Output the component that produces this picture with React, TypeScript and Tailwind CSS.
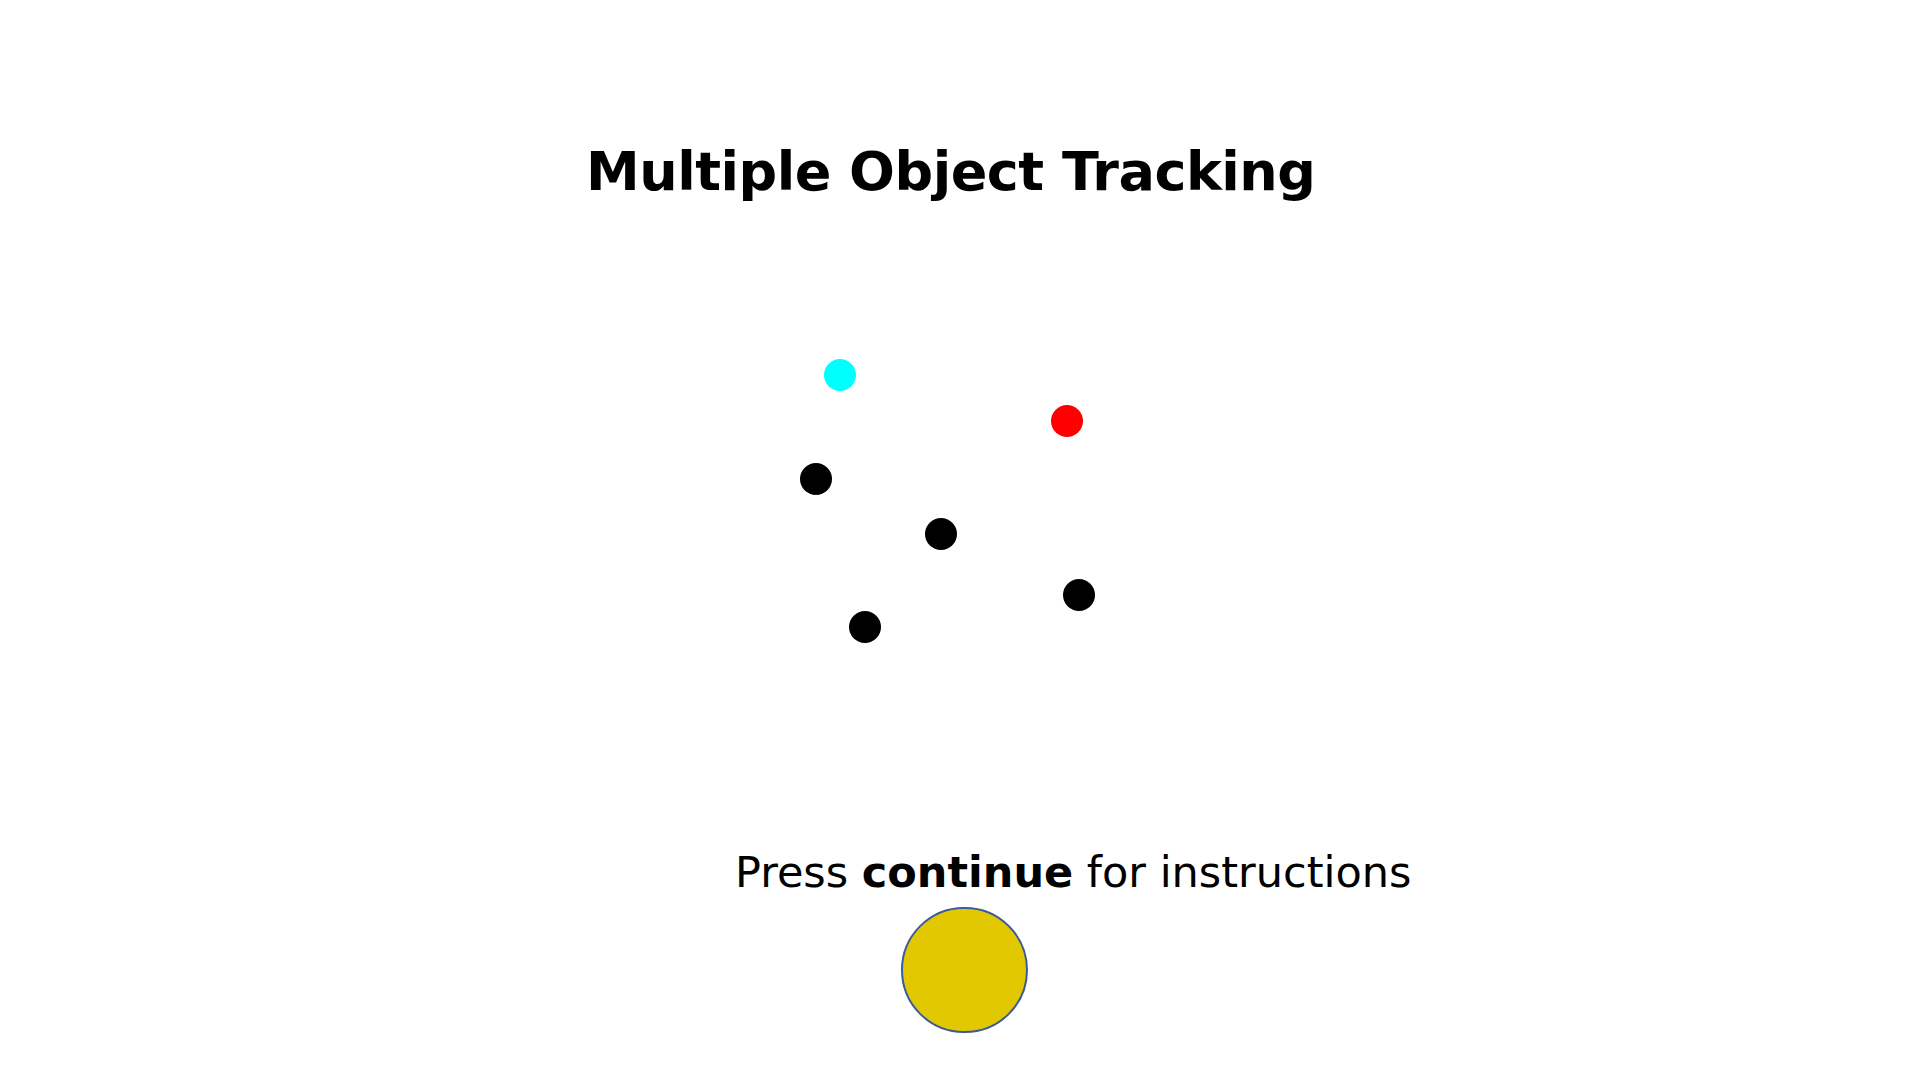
import React from "react";

type Dot = { left: number; top: number; color: string };

const dots: Dot[] = [
  { left: 824, top: 160, color: "bg-[#00ffff]" },
  { left: 1051, top: 206, color: "bg-[#ff0000]" },
  { left: 800, top: 264, color: "bg-black" },
  { left: 925, top: 319, color: "bg-black" },
  { left: 1063, top: 380, color: "bg-black" },
  { left: 849, top: 412, color: "bg-black" },
];

export default function App() {
  return (
    <div className="w-[1920px] h-[1080px] bg-white flex flex-col overflow-hidden font-['DejaVu_Sans',sans-serif] text-black">
      <h1 className="mt-[145px] pl-[586px] text-[54px] leading-[54px] font-bold tracking-[-0.5px] whitespace-nowrap">
        Multiple Object Tracking
      </h1>
      <div className="relative h-[652px]">
        {dots.map((d, i) => (
          <div
            key={i}
            className={`absolute w-[32px] h-[32px] rounded-full ${d.color}`}
            style={{ left: d.left, top: d.top }}
          />
        ))}
      </div>
      <p className="pl-[735px] text-[43px] leading-[43px] whitespace-nowrap">
        Press <span className="font-bold">continue</span> for instructions
      </p>
      <div className="mt-[13px] pl-[901px]">
        <button
          type="button"
          aria-label="continue"
          className="w-[127px] h-[126px] rounded-full bg-[#e2c800] border-2 border-[#3b5a9c]"
        />
      </div>
    </div>
  );
}
